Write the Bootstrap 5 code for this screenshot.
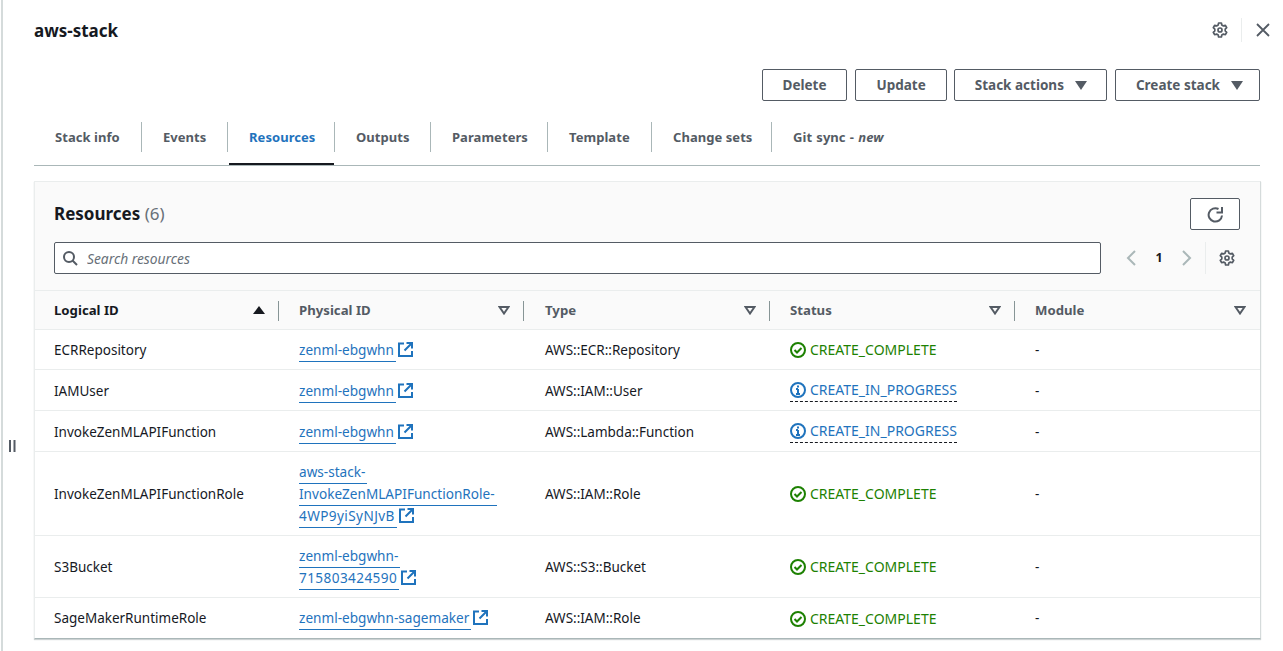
<!DOCTYPE html>
<html lang="en">

<head>
  <meta charset="UTF-8">
  <meta name="viewport" content="width=device-width, initial-scale=1.0">
  <title>aws-stack</title>
  <link href="https://cdn.jsdelivr.net/npm/bootstrap@5.3.5/dist/css/bootstrap.min.css" rel="stylesheet">
  <style>
    body { font-family: "Noto Sans", "Liberation Sans", sans-serif; font-size: 13.5px; color: #16191f; background: #fff; height: 651px; overflow: hidden; }
    svg { display: block; flex: none; }
    .side-rail { width: 34px; height: 651px; border-left: 2px solid #d5dbdb; margin-left: 1px; margin-right: -1px; padding-top: 440px; padding-left: 6px; flex: none; }
    .main-pane { width: 1226px; }
    .stack-title { font-size: 17px; font-weight: 700; line-height: 22px; margin: 0; }
    .title-row { height: 69px; padding-top: 20px; }
    .top-tools { margin: -2px -10px 0 0; gap: 13px; height: 24px; }
    .tool-sep { width: 1px; height: 24px; background: #eaeded; }
    .tool-close { margin-left: 1px; }
    .aws-btn { height: 32px; padding: 0 20px; border: 1px solid #545b64; border-radius: 2px; background: #fff; color: #545b64; font-size: 13.5px; font-weight: 700; display: flex; align-items: center; line-height: 20px; }
    .aws-btn:hover { color: #545b64; border-color: #545b64; background: #fff; }
    .aws-btn.with-caret { padding-right: 19px; margin-left: -1px; }
    .aws-btn.with-caret:last-child { padding-right: 16px; margin-left: 0; }
    .aws-btn.with-caret svg { margin-left: 11px; }
    .tab-bar { height: 65px; padding-top: 21px; border-bottom: 1px solid #aab7b8; flex-wrap: nowrap; }
    .tab-item { height: 43px; position: relative; padding: 0 0 0 22px; color: #545b64; font-weight: 700; font-size: 13px; letter-spacing: .05px; line-height: 30px; white-space: nowrap; }
    .tab-item:first-child { padding-left: 21px; width: 107px; }
    .tab-item:nth-child(2) { width: 86px; }
    .tab-item:nth-child(3) { width: 107px; }
    .tab-item:nth-child(4) { width: 96px; }
    .tab-item:nth-child(5) { width: 117px; }
    .tab-item:nth-child(6) { width: 104px; }
    .tab-item:nth-child(7) { width: 120px; }
    .tab-item:nth-child(8) { word-spacing: .8px; }
    .tab-item + .tab-item::before { content: ""; position: absolute; left: 0; top: 0; width: 1px; height: 30px; background: #aab7b8; }
    .tab-item.current { color: #1f73bd; }
    .tab-item.current::after { content: ""; position: absolute; left: 2px; right: 0; bottom: 0; height: 2px; background: #16191f; }
    .res-box { margin-top: 15px; margin-right: -1px; height: 458px; border: 1px solid #eaeded; border-right-color: #d5dbdb; border-bottom: 1px solid #aab7b8; background: #fafafa; box-shadow: 0 1px 1px rgba(0, 28, 36, .2); overflow: hidden; }
    .res-head { height: 60px; padding: 16px 20px 0 19px; }
    .res-title { font-size: 17px; font-weight: 700; line-height: 32px; margin: 0; }
    .res-title span { font-weight: 400; color: #687078; }
    .refresh-btn { width: 50px; padding: 0; justify-content: center; }
    .search-row { padding: 0 0 0 19px; height: 48px; }
    .search-field { width: 1047px; height: 32px; position: relative; }
    .search-field input { height: 32px; padding: 1px 10px 0 32px; border: 1px solid #545b64; border-radius: 2px; font-size: 13.8px; font-style: italic; box-shadow: none; }
    .search-field input::placeholder { color: #687078; opacity: 1; }
    .search-field svg { position: absolute; left: 8px; top: 8px; }
    .pager { margin-left: 24px; height: 32px; }
    .pager-num { font-size: 12.5px; font-weight: 700; width: 44px; text-align: center; }
    .pager-sep { width: 1px; height: 32px; background: #eaeded; margin: 0 13px 0 12px; }
    .res-table { width: 1225px; table-layout: fixed; margin: 0; --bs-table-bg: transparent; color: #16191f; border-collapse: separate; border-spacing: 0; }
    .res-table th { height: 40px; padding: 1px 15px 0 19px; background: #fafafa; border-top: 1px solid #eaeded; border-bottom: 1px solid #eaeded; color: #545b64; font-size: 13.2px; font-weight: 700; position: relative; vertical-align: middle; }
    .res-table th:nth-child(n+3) { padding-left: 20px; padding-right: 14px; }
    .res-table th.sorted { color: #16191f; }
    .res-table th + th::before { content: ""; position: absolute; left: -1px; top: 10px; width: 1px; height: 20px; background: #879596; }
    .res-table th:nth-child(2)::before, .res-table th:nth-child(3)::before { left: -2px; }
    .th-inner { display: flex; justify-content: space-between; align-items: center; }
    .res-table td { padding: 0 19px; background: #fff; border-bottom: 1px solid #eaeded; line-height: 22px; vertical-align: middle; font-size: 13.5px; }
    .res-table td:nth-child(n+3) { padding-left: 20px; }
    .res-table tr:last-child td { border-bottom: 0; }
    .h40 td { height: 40px; }
    .h41 td { height: 41px; padding-top: 1px; }
    .h84 td { height: 84px; }
    .h62 td { height: 62px; }
    .res-link { color: #1f73bd; text-decoration: none; font-size: 13.6px; }
    .res-link span { border-bottom: 1px solid #1f73bd; padding: 0 2px 2px 0; }
    .res-link span.has-digits { letter-spacing: .4px; }
    .res-link svg { display: inline-block; vertical-align: -2px; margin-left: 2px; }
    .state-ok, .state-run { display: inline-flex; align-items: center; gap: 4px; font-size: 14px; vertical-align: middle; }
    .state-ok { color: #1d8102; }
    .state-run { color: #1f73bd; border-bottom: 1px dashed #16191f; line-height: 20px; padding-bottom: 1px; }
  </style>
</head>

<body>
  <div class="d-flex">
    <div class="side-rail">
      <svg width="8" height="12" viewBox="0 0 8 12" fill="none" stroke="#545b64" stroke-width="2"><path d="M1 0v12M5.500 0v12"/></svg>
    </div>
    <div class="main-pane">
      <div class="title-row d-flex justify-content-between">
        <h1 class="stack-title">aws-stack</h1>
        <div class="top-tools d-flex align-items-center">
          <svg width="16" height="16" viewBox="0 0 16 16" fill="none" stroke="#545b64" stroke-width="1.700" stroke-linejoin="round"><path d="M6.600 1h2.800l.4 2 1.600.9 2-.6 1.300 2.400-1.500 1.400v1.800l1.500 1.400-1.300 2.400-2-.6-1.600.9-.4 2H6.600l-.4-2-1.600-.9-2 .6-1.300-2.400L2.800 8.900V7.100L1.300 5.700l1.300-2.400 2 .6 1.600-.9z"/><circle cx="8" cy="8" r="2"/></svg>
          <span class="tool-sep"></span>
          <svg class="tool-close" width="14" height="14" viewBox="0 0 14 14" fill="none" stroke="#545b64" stroke-width="1.800"><path d="M1 1l12 12M13 1L1 13"/></svg>
        </div>
      </div>

      <div class="d-flex justify-content-end gap-2">
        <button class="btn aws-btn">Delete</button>
        <button class="btn aws-btn">Update</button>
        <button class="btn aws-btn with-caret">Stack actions<svg width="12" height="9" viewBox="0 0 12 9" fill="#545b64"><path d="M0 0h12L6 9z"/></svg></button>
        <button class="btn aws-btn with-caret">Create stack<svg width="12" height="9" viewBox="0 0 12 9" fill="#545b64"><path d="M0 0h12L6 9z"/></svg></button>
      </div>

      <div class="tab-bar d-flex">
        <div class="tab-item">Stack info</div>
        <div class="tab-item">Events</div>
        <div class="tab-item current">Resources</div>
        <div class="tab-item">Outputs</div>
        <div class="tab-item">Parameters</div>
        <div class="tab-item">Template</div>
        <div class="tab-item">Change sets</div>
        <div class="tab-item">Git sync - <em>new</em></div>
      </div>

      <div class="res-box">
        <div class="res-head d-flex justify-content-between">
          <h2 class="res-title">Resources <span>(6)</span></h2>
          <button class="btn aws-btn refresh-btn">
            <svg width="17" height="17" viewBox="0 0 17 17" fill="none" stroke="#545b64" stroke-width="2"><path d="M15 9.500A6.700 6.700 0 1 1 11.500 3"/><path d="M15 1v5.500H9.500"/></svg>
          </button>
        </div>
        <div class="search-row d-flex">
          <div class="search-field">
            <svg width="16" height="16" viewBox="0 0 16 16" fill="none" stroke="#545b64" stroke-width="2"><circle cx="7" cy="7" r="5"/><path d="M10.500 10.500L15 15"/></svg>
            <input class="form-control" type="text" placeholder="Search resources">
          </div>
          <div class="pager d-flex align-items-center">
            <svg width="12" height="16" viewBox="0 0 12 16" fill="none" stroke="#aab7b8" stroke-width="2"><path d="M10 1L3 8l7 7"/></svg>
            <span class="pager-num">1</span>
            <svg width="12" height="16" viewBox="0 0 12 16" fill="none" stroke="#aab7b8" stroke-width="2"><path d="M2 1l7 7-7 7"/></svg>
            <span class="pager-sep"></span>
            <svg width="16" height="16" viewBox="0 0 16 16" fill="none" stroke="#545b64" stroke-width="1.700" stroke-linejoin="round"><path d="M6.600 1h2.800l.4 2 1.600.9 2-.6 1.300 2.400-1.500 1.400v1.800l1.500 1.400-1.300 2.400-2-.6-1.600.9-.4 2H6.600l-.4-2-1.600-.9-2 .6-1.300-2.400L2.800 8.900V7.100L1.300 5.700l1.300-2.400 2 .6 1.600-.9z"/><circle cx="8" cy="8" r="2"/></svg>
          </div>
        </div>

        <table class="table res-table">
          <thead>
            <tr>
              <th class="sorted"><div class="th-inner">Logical ID<svg width="12" height="8" viewBox="0 0 12 8" fill="#16191f"><path d="M6 0l6 8H0z"/></svg></div></th>
              <th><div class="th-inner">Physical ID<svg width="12" height="9" viewBox="0 0 12 9" fill="none" stroke="#545b64" stroke-width="2"><path d="M1.500 1h9L6 7.500z"/></svg></div></th>
              <th><div class="th-inner">Type<svg width="12" height="9" viewBox="0 0 12 9" fill="none" stroke="#545b64" stroke-width="2"><path d="M1.500 1h9L6 7.500z"/></svg></div></th>
              <th><div class="th-inner">Status<svg width="12" height="9" viewBox="0 0 12 9" fill="none" stroke="#545b64" stroke-width="2"><path d="M1.500 1h9L6 7.500z"/></svg></div></th>
              <th><div class="th-inner">Module<svg width="12" height="9" viewBox="0 0 12 9" fill="none" stroke="#545b64" stroke-width="2"><path d="M1.500 1h9L6 7.500z"/></svg></div></th>
            </tr>
          </thead>
          <tbody id="resourceRows"></tbody>
        </table>
      </div>
    </div>
  </div>

  <script>
    const extIcon = '<svg width="15" height="15" viewBox="0 0 15 15" fill="none" stroke="#1f73bd" stroke-width="2"><path d="M6 1.500H1v12.500h13V9"/><path d="M8.500 1H14v5.500M14 1L6.500 8.500"/></svg>';
    const okIcon = '<svg width="16" height="16" viewBox="0 0 16 16" fill="none" stroke="#1d8102" stroke-width="2"><circle cx="8" cy="8" r="7"/><path d="M4.500 8l2.500 2.500 4.500-4.500"/></svg>';
    const runIcon = '<svg width="16" height="16" viewBox="0 0 16 16" fill="none" stroke="#1f73bd" stroke-width="2"><circle cx="8" cy="8" r="7"/><path d="M8 7v5M6 12h4M6 7h2M8 3.500v2"/></svg>';

    const resources = [
      { h: "h40", id: "ECRRepository", phys: ["zenml-ebgwhn"], type: "AWS::ECR::Repository", ok: true },
      { h: "h41", id: "IAMUser", phys: ["zenml-ebgwhn"], type: "AWS::IAM::User", ok: false },
      { h: "h41", id: "InvokeZenMLAPIFunction", phys: ["zenml-ebgwhn"], type: "AWS::Lambda::Function", ok: false },
      { h: "h84", id: "InvokeZenMLAPIFunctionRole", phys: ["aws-stack-", "InvokeZenMLAPIFunctionRole-", "4WP9yiSyNJvB"], type: "AWS::IAM::Role", ok: true },
      { h: "h62", id: "S3Bucket", phys: ["zenml-ebgwhn-", "715803424590"], type: "AWS::S3::Bucket", ok: true },
      { h: "h40", id: "SageMakerRuntimeRole", phys: ["zenml-ebgwhn-sagemaker"], type: "AWS::IAM::Role", ok: true },
    ];

    document.getElementById("resourceRows").innerHTML = resources.map(r => `
      <tr class="${r.h}">
        <td>${r.id}</td>
        <td><a class="res-link" href="#">${r.phys.map(line => `<span class="${/\d/.test(line) ? "has-digits" : ""}">${line}</span>`).join("<br>")}${extIcon}</a></td>
        <td>${r.type}</td>
        <td>${r.ok
          ? `<span class="state-ok">${okIcon}CREATE_COMPLETE</span>`
          : `<span class="state-run">${runIcon}CREATE_IN_PROGRESS</span>`}</td>
        <td>-</td>
      </tr>`).join("");
  </script>
  <script src="https://cdn.jsdelivr.net/npm/bootstrap@5.3.5/dist/js/bootstrap.bundle.min.js"></script>
</body>

</html>
